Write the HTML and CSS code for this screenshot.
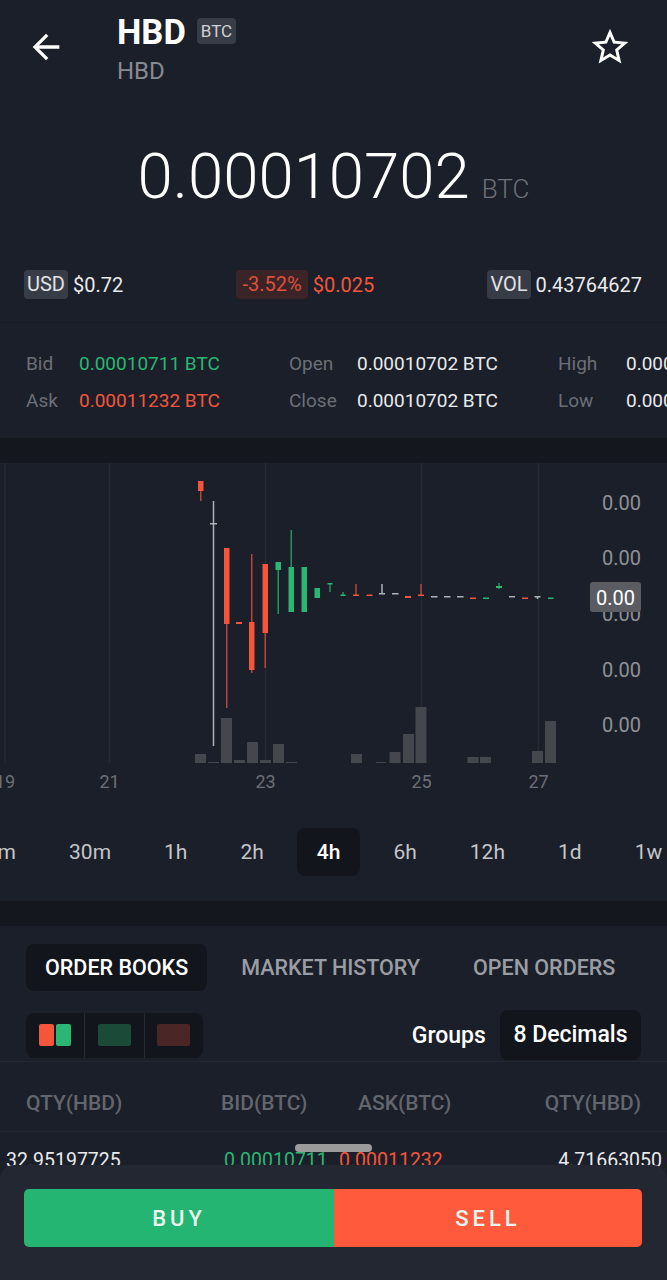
FILE: index.html
```html
<!DOCTYPE html>
<html lang="en">
<head>
    <meta charset="UTF-8">
    <title>HBD / BTC</title>
    <link rel="stylesheet" href="styles.css">
</head>
<body>

<div class="top">
    <div class="header">
        <button class="icon-btn back-btn" aria-label="Back">
            <svg width="40" height="40" viewBox="0 0 24 24"><path fill="#fff" d="M20 11H7.83l5.59-5.59L12 4l-8 8 8 8 1.41-1.41L7.83 13H20v-2z"/></svg>
        </button>
        <div class="title-block">
            <div class="title-line">
                <span class="title">HBD</span>
                <span class="badge market">BTC</span>
            </div>
            <div class="subtitle">HBD</div>
        </div>
        <button class="icon-btn star-btn" aria-label="Favourite">
            <svg width="44" height="44" viewBox="0 0 24 24"><path fill="#fff" d="M22 9.24l-7.19-.62L12 2 9.19 8.63 2 9.24l5.46 4.73L5.82 21 12 17.27 18.18 21l-1.63-7.03L22 9.24zM12 15.4l-3.76 2.27 1-4.28-3.32-2.88 4.38-.38L12 6.1l1.71 4.04 4.38.38-3.32 2.88 1 4.28L12 15.4z"/></svg>
        </button>
    </div>

    <div class="price">
        <span class="price-value">0.00010702</span>
        <span class="price-unit">BTC</span>
    </div>

    <div class="stats">
        <div class="stat"><span class="badge">USD</span><span>$0.72</span></div>
        <div class="stat down"><span class="badge badge-down">-3.52%</span><span>$0.025</span></div>
        <div class="stat"><span class="badge">VOL</span><span>0.43764627</span></div>
    </div>
</div>

<div class="quotes">
    <div class="quote-grid">
        <span class="label">Bid</span><span class="up">0.00010711 BTC</span>
        <span class="label">Open</span><span>0.00010702 BTC</span>
        <span class="label">High</span><span>0.00011232 BTC</span>
        <span class="label">Ask</span><span class="down">0.00011232 BTC</span>
        <span class="label">Close</span><span>0.00010702 BTC</span>
        <span class="label">Low</span><span>0.00010702 BTC</span>
    </div>
</div>

<div class="chart-panel">
    <svg class="chart" width="667" height="338" viewBox="0 462 667 338">
        <g class="grid">
            <line x1="5" y1="462" x2="5" y2="762"/>
            <line x1="109.5" y1="462" x2="109.5" y2="762"/>
            <line x1="265.5" y1="462" x2="265.5" y2="762"/>
            <line x1="421.5" y1="462" x2="421.5" y2="762"/>
            <line x1="538.5" y1="462" x2="538.5" y2="762"/>
        </g>

        <g class="volume">
            <rect x="195" y="753" width="11" height="9"/>
            <rect x="208" y="761" width="11" height="1"/>
            <rect x="221" y="717" width="11" height="45"/>
            <rect x="234" y="759" width="11" height="3"/>
            <rect x="247" y="741" width="11" height="21"/>
            <rect x="260" y="759" width="11" height="3"/>
            <rect x="273" y="743" width="11" height="19"/>
            <rect x="286" y="761" width="11" height="1"/>
            <rect x="351" y="753" width="11" height="9"/>
            <rect x="376" y="761" width="10" height="1"/>
            <rect x="389.5" y="751" width="11" height="11"/>
            <rect x="403" y="733" width="11" height="29"/>
            <rect x="415.5" y="706" width="11" height="56"/>
            <rect x="467.5" y="756" width="11" height="6"/>
            <rect x="480" y="756" width="11" height="6"/>
            <rect x="532" y="750" width="11" height="12"/>
            <rect x="545" y="720" width="11" height="42"/>
        </g>

        <g class="wick-red">
            <line x1="200.75" y1="490" x2="200.75" y2="500"/>
            <line x1="226.75" y1="623" x2="226.75" y2="707"/>
            <line x1="251.75" y1="553" x2="251.75" y2="672"/>
            <line x1="265.25" y1="632" x2="265.25" y2="667"/>
            <line x1="356" y1="583" x2="356" y2="595"/>
            <line x1="421" y1="583" x2="421" y2="595"/>
        </g>
        <g class="wick-green">
            <line x1="278.25" y1="569" x2="278.25" y2="613"/>
            <line x1="291.25" y1="529" x2="291.25" y2="566"/>
            <line x1="330" y1="583" x2="330" y2="591"/>
            <line x1="343" y1="591" x2="343" y2="594"/>
            <line x1="499" y1="582" x2="499" y2="588"/>
        </g>
        <g class="wick-grey">
            <line x1="213.5" y1="500" x2="213.5" y2="745"/>
            <line x1="382" y1="583" x2="382" y2="593"/>
            <line x1="537.5" y1="595" x2="537.5" y2="598"/>
        </g>

        <g class="candle-red">
            <rect x="198" y="480" width="5.5" height="10"/>
            <rect x="224" y="547" width="5.5" height="76"/>
            <rect x="236" y="621" width="6" height="2"/>
            <rect x="249" y="621" width="5.5" height="48"/>
            <rect x="262.5" y="563" width="5.5" height="69"/>
            <rect x="353" y="593.5" width="6" height="1.5"/>
            <rect x="366.5" y="593.5" width="6" height="1.5"/>
            <rect x="405" y="595" width="6" height="2"/>
            <rect x="418" y="593.5" width="6" height="1.5"/>
            <rect x="470" y="596.5" width="6" height="1.5"/>
            <rect x="522" y="596.5" width="6" height="1.5"/>
        </g>
        <g class="candle-green">
            <rect x="275.5" y="561" width="5.5" height="8"/>
            <rect x="288.5" y="566" width="5.5" height="45"/>
            <rect x="301.5" y="566" width="5.5" height="45"/>
            <rect x="314.5" y="587" width="5.5" height="10"/>
            <rect x="327.5" y="582" width="5" height="1.5"/>
            <rect x="340.5" y="593.5" width="5" height="1.5"/>
            <rect x="483" y="596.5" width="6" height="1.5"/>
            <rect x="496" y="585" width="6" height="2"/>
            <rect x="548" y="596.5" width="5.5" height="1.5"/>
        </g>
        <g class="candle-grey">
            <rect x="210" y="522" width="7" height="1.5"/>
            <rect x="379" y="592" width="6" height="1.5"/>
            <rect x="392" y="592" width="6.5" height="1.5"/>
            <rect x="431" y="595" width="6.5" height="1.5"/>
            <rect x="444" y="595" width="6.5" height="1.5"/>
            <rect x="457" y="595" width="6.5" height="1.5"/>
            <rect x="509" y="595" width="6" height="1.5"/>
            <rect x="534.5" y="595" width="6" height="1.5"/>
        </g>

        <g class="y-axis">
            <text x="641" y="509">0.00</text>
            <text x="641" y="564">0.00</text>
            <text x="641" y="620">0.00</text>
            <text x="641" y="675.5">0.00</text>
            <text x="641" y="730.5">0.00</text>
        </g>
        <rect class="last-price" x="590" y="581" width="51" height="30" rx="3"/>
        <text class="last-price-text" x="615.5" y="603.5">0.00</text>

        <g class="x-axis">
            <text x="5" y="787">19</text>
            <text x="109.5" y="787">21</text>
            <text x="265.5" y="787">23</text>
            <text x="421.5" y="787">25</text>
            <text x="538.5" y="787">27</text>
        </g>
    </svg>

    <div class="intervals">
        <span>15m</span>
        <span>30m</span>
        <span>1h</span>
        <span>2h</span>
        <span class="active">4h</span>
        <span>6h</span>
        <span>12h</span>
        <span>1d</span>
        <span>1w</span>
    </div>
</div>

<div class="book-panel">
    <div class="tabs">
        <span class="tab active">ORDER BOOKS</span>
        <span class="tab">MARKET HISTORY</span>
        <span class="tab">OPEN ORDERS</span>
    </div>

    <div class="book-tools">
        <div class="view-toggle">
            <span><i class="sq sq-red"></i><i class="sq sq-green"></i></span>
            <span><i class="sq sq-wide sq-bids"></i></span>
            <span><i class="sq sq-wide sq-asks"></i></span>
        </div>
        <div class="groups">
            <span>Groups</span>
            <span class="decimals">8 Decimals</span>
        </div>
    </div>

    <div class="book-head">
        <span>QTY(HBD)</span>
        <span>BID(BTC)</span>
        <span>ASK(BTC)</span>
        <span class="right">QTY(HBD)</span>
    </div>

    <div class="book-row">
        <span>32.95197725</span>
        <span class="up">0.00010711</span>
        <span class="down">0.00011232</span>
        <span class="right">4.71663050</span>
    </div>
</div>

<div class="trade-sheet">
    <div class="handle"></div>
    <div class="trade-buttons">
        <button class="buy">BUY</button>
        <button class="sell">SELL</button>
    </div>
</div>

</body>
</html>
```

FILE: styles.css
```css
body {
    margin: 0;
    height: 1280px;
    overflow: hidden;
    background-color: #14171e;
    color: #e9eaec;
    font-family: Roboto, "Noto Sans", Arial, sans-serif;
}
button {
    font-family: inherit;
}
.up {
    color: #2ab673;
}
.down {
    color: #f4553b;
}

/* header + price */
.top {
    background-color: #1b1f29;
    border-bottom: 1px solid #161a22;
    height: 322px;
}
.header {
    display: flex;
    align-items: flex-start;
    height: 90px;
    padding: 0 35px 0 26px;
}
.icon-btn {
    background: none;
    border: none;
    padding: 0;
    display: flex;
}
.back-btn {
    margin-top: 27px;
}
.star-btn {
    margin-top: 25px;
    margin-left: auto;
}
.title-block {
    margin-left: 51px;
    padding-top: 13px;
}
.title-line {
    display: flex;
    align-items: center;
    gap: 11px;
    height: 38px;
}
.title {
    font-size: 34.5px;
    font-weight: 700;
    color: #fff;
}
.badge {
    display: inline-block;
    height: 29px;
    line-height: 29px;
    padding: 0 3px;
    border-radius: 4px;
    background-color: #383c46;
    color: #e2e3e6;
}
.badge.market {
    height: 26px;
    line-height: 26px;
    padding: 0 4px;
    font-size: 17px;
    color: #d0d2d6;
    margin-top: -2px;
}
.subtitle {
    margin-top: 7px;
    font-size: 24px;
    line-height: 26px;
    color: #868a92;
}
.price {
    display: flex;
    justify-content: center;
    align-items: baseline;
    gap: 12px;
    margin-top: 56px;
    line-height: 62px;
}
.price-value {
    font-size: 63.5px;
    font-weight: 300;
    color: #fff;
}
.price-unit {
    font-size: 26px;
    font-weight: 300;
    color: #6c7078;
}
.stats {
    display: flex;
    justify-content: space-between;
    padding: 0 25px 0 24px;
    margin-top: 50px;
    font-size: 20px;
}
.stat {
    display: flex;
    align-items: center;
    gap: 5px;
}
.badge-down {
    background-color: #3b2428;
    color: #dd503b;
    padding: 0 6px;
}

/* bid / ask */
.quotes {
    background-color: #1b1f29;
    padding: 22px 0 19px 26px;
    overflow: hidden;
    margin-bottom: 25px;
}
.quote-grid {
    display: grid;
    grid-template-columns: 53px 210px 68px 201px 68px 200px;
    line-height: 37px;
    font-size: 19px;
    white-space: nowrap;
    width: 800px;
}
.label {
    color: #6b6f77;
}

/* chart */
.chart-panel {
    background-color: #1b1f29;
    padding-bottom: 25px;
    overflow: hidden;
    margin-bottom: 25px;
}
.chart {
    display: block;
}
.grid line {
    stroke: #262a33;
    stroke-width: 1.5;
}
.volume rect {
    fill: #44474e;
}
.wick-red line {
    stroke: #b4473a;
    stroke-width: 1.5;
}
.wick-green line {
    stroke: #23935f;
    stroke-width: 1.5;
}
.wick-grey line {
    stroke: #aeb0b5;
    stroke-width: 1.5;
}
.candle-red rect {
    fill: #f4553b;
}
.candle-green rect {
    fill: #2bb673;
}
.candle-grey rect {
    fill: #b0b2b7;
}
.y-axis text {
    fill: #8e9198;
    font-size: 20px;
    text-anchor: end;
}
.last-price {
    fill: #5a5c61;
}
.last-price-text {
    fill: #fff;
    font-size: 20px;
    text-anchor: middle;
}
.x-axis text {
    fill: #6b6f77;
    font-size: 18px;
    text-anchor: middle;
}
.intervals {
    display: flex;
    gap: 13px;
    margin: 27px 0 0 -46px;
    white-space: nowrap;
}
.intervals span {
    padding: 0 20px;
    height: 48px;
    line-height: 48px;
    font-size: 21px;
    color: #c4c6ca;
    border-radius: 8px;
}
.intervals .active {
    background-color: #12151b;
    color: #fff;
    font-weight: 500;
}

/* order book */
.book-panel {
    background-color: #1b1f29;
    padding-top: 18px;
    height: 400px;
}
.tabs {
    display: flex;
    gap: 15px;
    padding: 0 26px;
}
.tab {
    padding: 0 19px;
    height: 47px;
    line-height: 47px;
    font-size: 21.5px;
    font-weight: 500;
    color: #9a9da3;
    border-radius: 8px;
    white-space: nowrap;
}
.tab.active {
    background-color: #12151b;
    color: #fff;
}
.book-tools {
    display: flex;
    align-items: center;
    padding: 0 26px;
    margin-top: 19px;
    height: 50px;
}
.view-toggle {
    display: flex;
    width: 177px;
    height: 45px;
    background-color: #12151b;
    border-radius: 8px;
}
.view-toggle span {
    flex: 1;
    display: flex;
    align-items: center;
    justify-content: center;
    gap: 2px;
    border-left: 1px solid #252932;
}
.view-toggle span:first-child {
    border-left: none;
}
.sq {
    display: block;
    width: 15px;
    height: 22px;
    border-radius: 2px;
}
.sq-red {
    background-color: #f4553b;
}
.sq-green {
    background-color: #2bb673;
}
.sq-wide {
    width: 33px;
}
.sq-bids {
    background-color: #1c4a39;
}
.sq-asks {
    background-color: #4a2627;
}
.groups {
    display: flex;
    align-items: center;
    gap: 14px;
    margin-left: auto;
    font-size: 23px;
    font-weight: 500;
    color: #fff;
}
.decimals {
    padding: 0 13.5px;
    height: 50px;
    line-height: 50px;
    background-color: #12151b;
    border-radius: 8px;
}
.book-head {
    display: grid;
    grid-template-columns: 195px 137px 1fr 1fr;
    margin-top: 1px;
    padding: 29px 26px 16px 26px;
    border-top: 1px solid #232731;
    border-bottom: 1px solid #232731;
    line-height: 24px;
    font-size: 21px;
    font-weight: 500;
    color: #62666e;
}
.right {
    text-align: right;
}
.book-row {
    display: grid;
    grid-template-columns: 218px 115px 1fr 1fr;
    padding: 17px 5px 0 6px;
    line-height: 24px;
    font-size: 19.5px;
    white-space: nowrap;
}

/* bottom sheet */
.trade-sheet {
    position: fixed;
    left: 0;
    right: 0;
    bottom: 0;
    height: 91px;
    padding: 24px 25px 0 24px;
    background-color: #232732;
    border-radius: 14px 14px 0 0;
}
.handle {
    position: absolute;
    top: -21px;
    left: 295px;
    width: 77px;
    height: 8px;
    border-radius: 4px;
    background-color: #9b9b9b;
}
.trade-buttons {
    display: flex;
    height: 58px;
}
.trade-buttons button {
    border: none;
    font-size: 22px;
    font-weight: 500;
    letter-spacing: 4px;
    color: #eef6f1;
    cursor: pointer;
}
.buy {
    width: 310px;
    background-color: #24b572;
    border-radius: 5px 0 0 5px;
}
.sell {
    flex: 1;
    background-color: #ff5a3c;
    border-radius: 0 5px 5px 0;
}
```
